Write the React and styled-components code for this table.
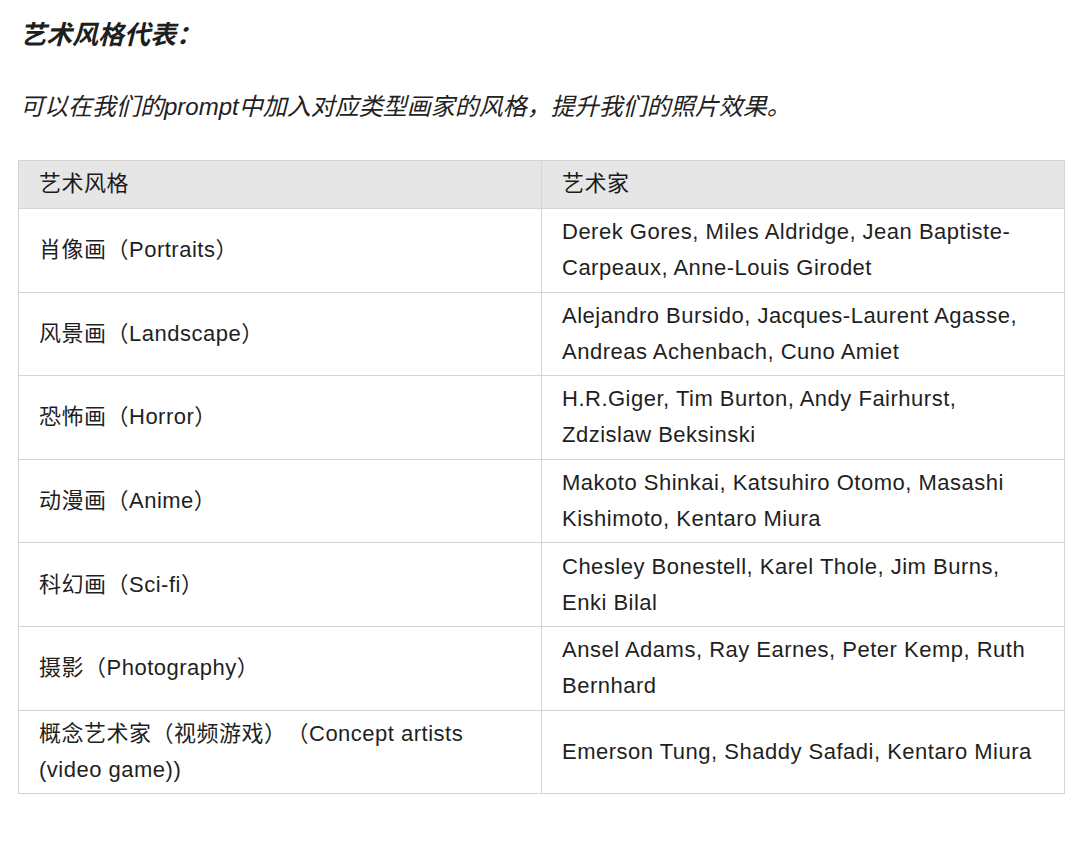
import React from "react";
import styled, { createGlobalStyle } from "styled-components";

const GlobalStyle = createGlobalStyle`
	body {
		margin: 0;
		background: #ffffff;
		font-family: "Liberation Sans", "Noto Sans CJK SC", sans-serif;
		color: #1f1f1f;
		text-spacing-trim: space-all;
	}
`;

const Page = styled.div`
	padding: 17px 15px 0 18px;
`;

const Title = styled.h3`
	margin: 0 0 0 2px;
	font-size: 26px;
	line-height: 36px;
	font-weight: 700;
	font-style: italic;
`;

const Lead = styled.p`
	margin: 36px 0 0 2px;
	font-size: 24px;
	line-height: 36px;
	font-style: italic;
	color: #222;
`;

const Table = styled.table`
	width: 100%;
	margin-top: 35px;
	border-collapse: collapse;
	table-layout: fixed;
	font-size: 22px;
	line-height: 36px;
	letter-spacing: 0.5px;
`;

const Head = styled.th`
	background: #e6e6e6;
	border: 1px solid #d4d4d4;
	padding: 5px 20px 6px;
	text-align: left;
	font-weight: 400;
	color: #1a1a1a;
`;

const Cell = styled.td`
	border: 1px solid #d4d4d4;
	padding: 5px 20px 5px;
	height: 72.6px;
	vertical-align: middle;
	color: #1f1f1f;
`;

const rows = [
	["肖像画（Portraits）", "Derek Gores, Miles Aldridge, Jean Baptiste-Carpeaux, Anne-Louis Girodet"],
	["风景画（Landscape）", "Alejandro Bursido, Jacques-Laurent Agasse, Andreas Achenbach, Cuno Amiet"],
	["恐怖画（Horror）", "H.R.Giger, Tim Burton, Andy Fairhurst, Zdzislaw Beksinski"],
	["动漫画（Anime）", "Makoto Shinkai, Katsuhiro Otomo, Masashi Kishimoto, Kentaro Miura"],
	["科幻画（Sci-fi）", "Chesley Bonestell, Karel Thole, Jim Burns, Enki Bilal"],
	["摄影（Photography）", "Ansel Adams, Ray Earnes, Peter Kemp, Ruth Bernhard"],
	["概念艺术家（视频游戏）（Concept artists (video game))", "Emerson Tung, Shaddy Safadi, Kentaro Miura"],
];

const App = () => {
	return (
		<Page>
			<GlobalStyle />
			<Title>艺术风格代表：</Title>
			<Lead>可以在我们的prompt中加入对应类型画家的风格，提升我们的照片效果。</Lead>
			<Table>
				<thead>
					<tr>
						<Head>艺术风格</Head>
						<Head>艺术家</Head>
					</tr>
				</thead>
				<tbody>
					{rows.map(([style, artists]) => (
						<tr key={style}>
							<Cell>{style}</Cell>
							<Cell>{artists}</Cell>
						</tr>
					))}
				</tbody>
			</Table>
		</Page>
	);
};

export default App;
